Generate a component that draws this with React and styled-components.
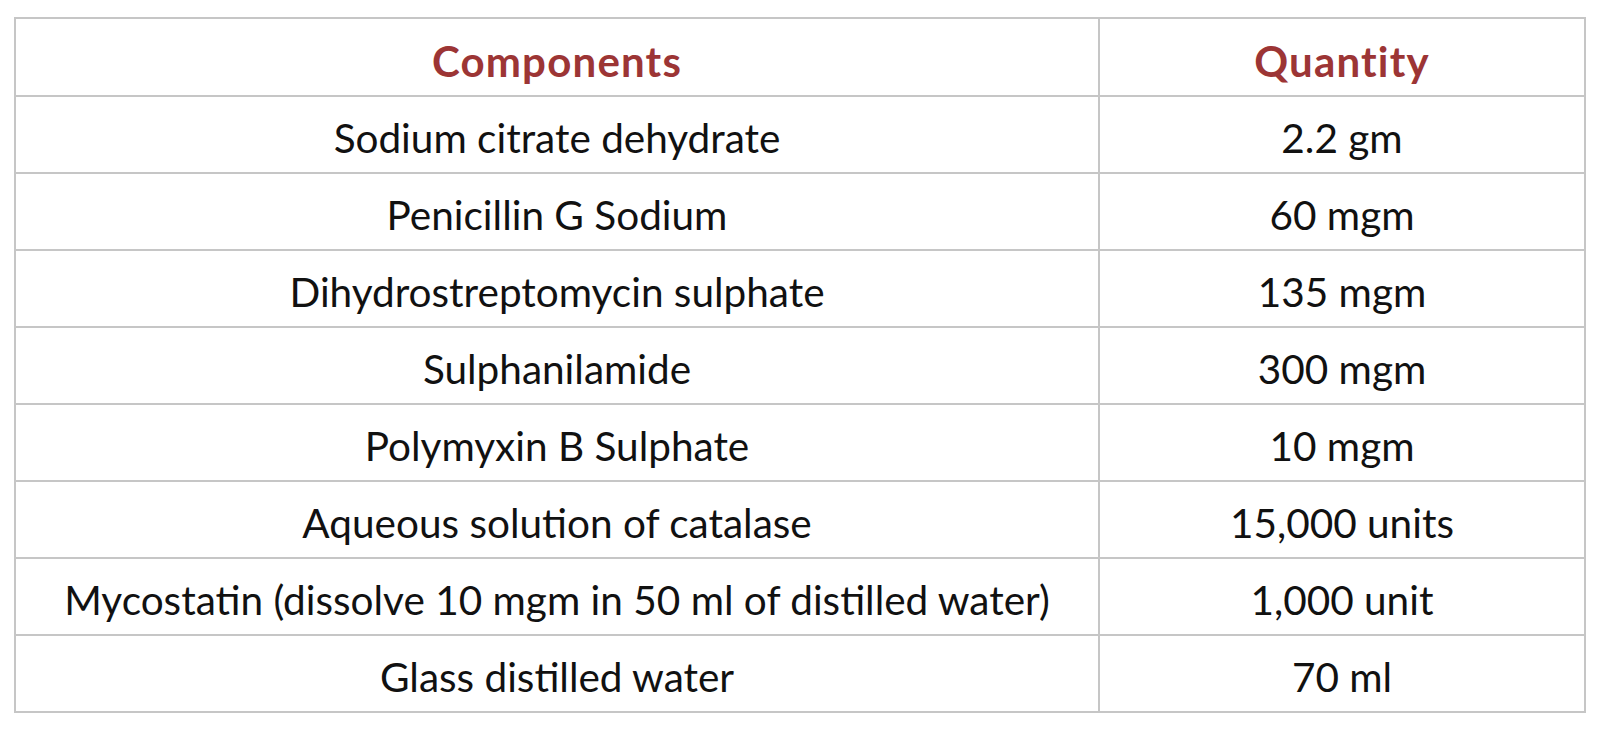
import React from "react";
import styled, { createGlobalStyle } from "styled-components";

const Global = createGlobalStyle`
  html, body { margin: 0; padding: 0; background: #ffffff; }
  body { font-family: "Lato", "Liberation Sans", sans-serif; }
`;

const Page = styled.div`
  padding: 17px 16px 16px 14px;
`;

const Table = styled.table`
  width: 1570px;
  border-collapse: collapse;
  border: 2px solid #c6c6c6;
  table-layout: fixed;
`;

const HeadCell = styled.th`
  height: 68px;
  padding: 8px 0 0;
  border: 2px solid #c6c6c6;
  color: #9c3535;
  font-weight: 700;
  font-size: 42px;
  letter-spacing: 1.2px;
  text-align: center;
  vertical-align: middle;
`;

const Cell = styled.td`
  height: 69px;
  padding: 6px 0 0;
  border: 2px solid #c6c6c6;
  color: #111111;
  font-weight: 400;
  font-size: 40.5px;
  text-align: center;
  vertical-align: middle;
`;

const rows = [
  ["Sodium citrate dehydrate", "2.2 gm"],
  ["Penicillin G Sodium", "60 mgm"],
  ["Dihydrostreptomycin sulphate", "135 mgm"],
  ["Sulphanilamide", "300 mgm"],
  ["Polymyxin B Sulphate", "10 mgm"],
  ["Aqueous solution of catalase", "15,000 units"],
  ["Mycostatin (dissolve 10 mgm in 50 ml of distilled water)", "1,000 unit"],
  ["Glass distilled water", "70 ml"],
];

export default function App() {
  return (
    <Page>
      <Global />
      <Table>
        <colgroup>
          <col style={{ width: "1084px" }} />
          <col style={{ width: "486px" }} />
        </colgroup>
        <thead>
          <tr>
            <HeadCell>Components</HeadCell>
            <HeadCell>Quantity</HeadCell>
          </tr>
        </thead>
        <tbody>
          {rows.map(([c, q]) => (
            <tr key={c}>
              <Cell>{c}</Cell>
              <Cell>{q}</Cell>
            </tr>
          ))}
        </tbody>
      </Table>
    </Page>
  );
}
